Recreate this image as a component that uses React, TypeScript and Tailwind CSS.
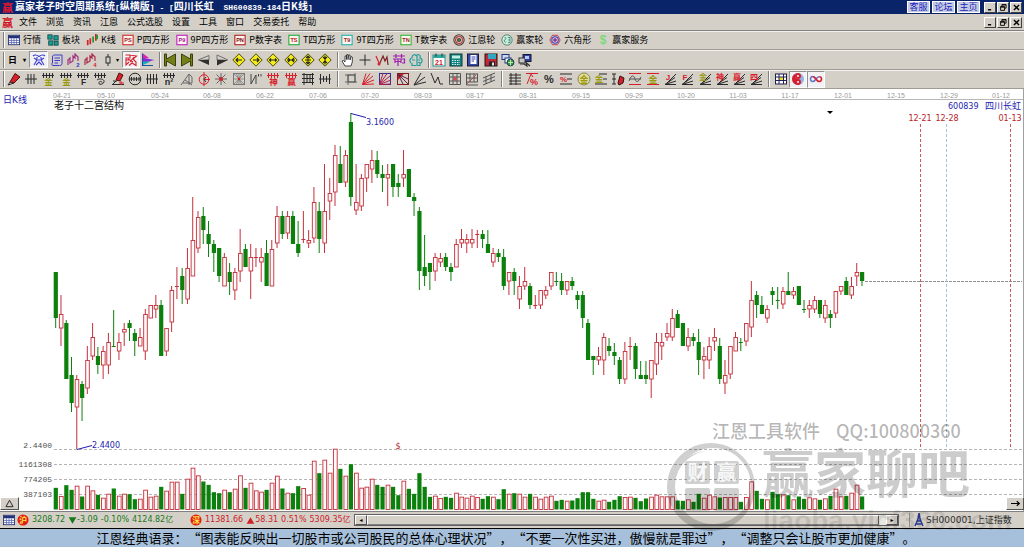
import type { ReactNode } from 'react';

/* ---------- data ---------- */

type Kind = 'u' | 'd';
// kind, high, body top, body bottom, low, volume height
type Candle = [Kind, number, number, number, number, number];

const STEP = 5.27;
const FIRST_X = 55.7;

const prices: [Kind, number, number, number, number][] = [
  ['d', 272, 272, 318, 328], ['u', 295, 314, 328, 346], ['d', 320, 323, 379, 379], ['d', 357, 375, 403, 412],
  ['u', 375, 379, 407, 449], ['d', 381, 384, 398, 421], ['u', 346, 360, 388, 394], ['u', 323, 337, 356, 360],
  ['d', 347, 356, 365, 374], ['u', 346, 351, 365, 379], ['u', 333, 342, 365, 374], ['d', 310, 346, 347, 347],
  ['u', 333, 342, 351, 360], ['u', 323, 329, 332, 346], ['d', 320, 323, 328, 341], ['d', 329, 333, 341, 356],
  ['u', 328, 337, 346, 346], ['u', 309, 314, 351, 360], ['u', 305, 305, 318, 318], ['u', 295, 305, 309, 318],
  ['d', 300, 305, 356, 356], ['u', 328, 328, 351, 356], ['u', 286, 290, 322, 332], ['u', 267, 286, 287, 299],
  ['d', 268, 276, 290, 304], ['u', 248, 268, 299, 304], ['u', 197, 240, 276, 276], ['u', 211, 217, 248, 253],
  ['d', 207, 216, 230, 244], ['d', 221, 234, 244, 257], ['d', 240, 244, 253, 272], ['d', 248, 248, 276, 282],
  ['u', 253, 257, 286, 286], ['d', 263, 272, 282, 295], ['u', 268, 272, 290, 300], ['u', 229, 253, 271, 282],
  ['d', 244, 249, 267, 267], ['u', 244, 257, 271, 299], ['u', 248, 257, 258, 267], ['u', 248, 257, 262, 282],
  ['d', 240, 253, 286, 286], ['u', 240, 249, 286, 286], ['u', 206, 216, 243, 248], ['d', 211, 216, 234, 239],
  ['u', 211, 216, 233, 239], ['d', 211, 216, 244, 244], ['d', 221, 244, 253, 257], ['u', 211, 239, 240, 243],
  ['u', 230, 240, 243, 248], ['u', 187, 202, 238, 243], ['d', 202, 211, 239, 253], ['u', 164, 211, 243, 253],
  ['u', 178, 193, 201, 220], ['u', 145, 155, 192, 206], ['d', 146, 164, 183, 183], ['u', 150, 155, 182, 187],
  ['d', 113, 122, 197, 206], ['u', 164, 202, 210, 215], ['u', 174, 178, 206, 211], ['u', 164, 164, 178, 192],
  ['u', 150, 160, 169, 183], ['d', 151, 160, 174, 178], ['d', 165, 174, 178, 192], ['u', 164, 174, 178, 206],
  ['d', 164, 164, 187, 197], ['d', 174, 183, 187, 197], ['u', 150, 174, 178, 187], ['d', 169, 169, 197, 197],
  ['d', 193, 197, 201, 216], ['d', 207, 211, 271, 290], ['d', 235, 267, 276, 286], ['d', 263, 263, 272, 290],
  ['u', 253, 257, 271, 281], ['u', 253, 258, 262, 267], ['d', 253, 257, 267, 271], ['d', 263, 267, 272, 281],
  ['u', 239, 244, 267, 267], ['u', 229, 239, 243, 248], ['u', 234, 239, 243, 253], ['u', 229, 239, 243, 248],
  ['u', 230, 234, 235, 248], ['d', 230, 234, 239, 248], ['d', 230, 244, 253, 253], ['u', 248, 253, 262, 267],
  ['d', 249, 253, 257, 262], ['d', 249, 257, 286, 290], ['u', 272, 272, 281, 295], ['d', 268, 272, 281, 295],
  ['u', 276, 286, 299, 309], ['u', 267, 281, 286, 290], ['d', 283, 286, 305, 309], ['u', 295, 305, 306, 309],
  ['u', 290, 290, 305, 309], ['u', 286, 290, 295, 299], ['u', 272, 272, 286, 290], ['d', 272, 281, 282, 286],
  ['d', 273, 281, 290, 295], ['u', 281, 281, 290, 295], ['d', 277, 281, 286, 290], ['d', 291, 295, 300, 309],
  ['d', 291, 295, 318, 328], ['d', 319, 323, 360, 360], ['d', 356, 356, 360, 375], ['u', 347, 356, 360, 365],
  ['u', 333, 337, 360, 375], ['d', 338, 346, 351, 356], ['d', 343, 352, 356, 365], ['d', 357, 360, 379, 384],
  ['u', 342, 351, 379, 384], ['u', 337, 346, 347, 360], ['d', 343, 346, 369, 379], ['d', 361, 375, 379, 379],
  ['d', 361, 375, 379, 384], ['u', 360, 360, 379, 398], ['u', 333, 342, 364, 375], ['u', 333, 342, 346, 360],
  ['u', 323, 333, 337, 341], ['u', 309, 318, 337, 341], ['d', 310, 314, 328, 328], ['d', 323, 323, 346, 346],
  ['u', 328, 337, 346, 351], ['d', 333, 337, 341, 346], ['d', 329, 342, 360, 375], ['u', 347, 356, 360, 379],
  ['u', 337, 346, 360, 369], ['u', 328, 337, 341, 351], ['d', 338, 346, 379, 384], ['u', 360, 375, 383, 394],
  ['u', 346, 346, 374, 379], ['u', 332, 337, 351, 351], ['d', 338, 342, 343, 351], ['u', 323, 323, 341, 346],
  ['u', 281, 300, 327, 337], ['d', 291, 295, 305, 318], ['d', 296, 305, 314, 314], ['u', 305, 309, 318, 323],
  ['d', 287, 291, 295, 305], ['d', 287, 300, 301, 309], ['u', 287, 291, 304, 309], ['d', 272, 291, 295, 295],
  ['u', 287, 291, 295, 299], ['d', 286, 286, 305, 305], ['d', 300, 309, 310, 313], ['u', 300, 305, 309, 318],
  ['u', 296, 300, 309, 313], ['d', 300, 300, 314, 318], ['u', 300, 305, 318, 323], ['d', 310, 314, 318, 328],
  ['u', 291, 291, 313, 318], ['u', 286, 286, 291, 295], ['d', 277, 281, 295, 295], ['u', 277, 286, 295, 299],
  ['u', 263, 272, 276, 286], ['d', 272, 272, 281, 286],
];

const volumes: number[] = [
  65, 39, 73, 59, 70, 39, 70, 56, 44, 34, 46, 63, 40, 46, 46, 31, 31, 58, 37, 40, 68, 55, 82, 82, 47, 91, 124, 101,
  84, 74, 52, 49, 58, 52, 61, 101, 65, 79, 56, 52, 59, 79, 100, 63, 49, 49, 70, 63, 43, 145, 109, 148, 109, 181, 122,
  100, 136, 109, 64, 67, 91, 74, 68, 73, 68, 43, 85, 62, 47, 109, 68, 38, 40, 33, 38, 35, 49, 37, 34, 40, 36, 32, 40,
  37, 31, 61, 46, 49, 46, 37, 47, 37, 31, 37, 40, 26, 29, 25, 27, 34, 52, 52, 32, 25, 28, 23, 29, 40, 36, 37, 35, 25,
  33, 37, 43, 38, 38, 38, 27, 26, 29, 23, 47, 34, 43, 38, 36, 36, 36, 36, 23, 36, 83, 56, 32, 29, 53, 46, 44, 43, 29,
  39, 32, 35, 32, 29, 32, 41, 61, 38, 41, 49, 73, 39,
];

const candles: Candle[] = prices.map((p, i) => [...p, (volumes[i] ?? 30) / 3] as Candle);

const axisDates: [string, number][] = [
  ['04-21', 62], ['05-10', 106], ['05-24', 160], ['06-08', 212], ['06-22', 265], ['07-06', 318], ['07-20', 370],
  ['08-03', 423], ['08-17', 475], ['08-31', 528], ['09-15', 581], ['09-29', 634], ['10-20', 686], ['11-03', 738],
  ['11-17', 790], ['12-01', 843], ['12-15', 896], ['12-29', 949], ['01-12', 1001],
];

/* ---------- icon helpers ---------- */

const K = '#2a2a2a';
const R = '#d8202c';
const G = '#9a9a10';
const B = '#3a3ad0';

const line = (d: string, color = K, width = 1, fill = 'none') => (
  <path d={d} stroke={color} strokeWidth={width} fill={fill} />
);
const glyph = (t: string, x: number, y: number, size: number, color: string) => (
  <text x={x} y={y} fontSize={size} fill={color} textAnchor="middle" fontWeight="bold">
    {t}
  </text>
);
const comb = (color = K) => line('M1 3.5H13M2.5 1V6M5.5 1V6M8.5 1V6M11.5 1V6', color);
const fan = (color = K) => line('M2 12.5H13M2 12.5L13 9M2 12.5L12 5.5M4 11L13 2', color);
const diamond = (arrow: string) => (
  <>
    <path d="M7 .8L13.2 7L7 13.2L.8 7Z" fill="#f4ec1c" stroke="#4a4a10" />
    {line(arrow, '#222', 1.1)}
  </>
);
const rays = (color: string) =>
  line('M1.5 12.5L13 12M1.5 12.5L13 8M1.5 12.5L12 4M1.5 12.5L9 1.5M1.5 12.5L5 1.5', color);
const combGlyph = (t: string, color: string, combColor = K) => (
  <>
    {comb(combColor)}
    {glyph(t, 7.5, 13, 8.5, color)}
  </>
);
const fanGlyph = (t: string, color: string) => (
  <>
    {fan()}
    {glyph(t, 5, 7.5, 8, color)}
  </>
);
const boxed = (t: string, stroke: string, color: string) => (
  <>
    <rect x="1" y="1.5" width="12" height="11" fill="#fff4f0" stroke={stroke} strokeWidth="1.3" />
    {glyph(t, 7, 9.7, 6.5, color)}
  </>
);

const calendarTable = (
  <>
    <rect x=".5" y="1.5" width="13" height="11" fill="#fff" stroke="#1c2c70" />
    <rect x="1" y="2" width="12" height="3" fill="#23307c" />
    {line('M1 7.5H13M1 10H13M4 5V12M7 5V12M10 5V12', '#5060b0', 0.9)}
  </>
);

type Tool = { name: string; art: ReactNode; on?: boolean };

function Icon({ children, size = 'size-[14px]' }: { children: ReactNode; size?: string }) {
  return (
    <svg viewBox="0 0 14 14" aria-hidden="true" className={`${size} block shrink-0 font-['Liberation_Sans','Noto_Sans_CJK_SC',sans-serif]`}>
      {children}
    </svg>
  );
}

/* ---------- toolbar contents ---------- */

const menus = ['文件', '浏览', '资讯', '江恩', '公式选股', '设置', '工具', '窗口', '交易委托', '帮助'];

const features: Tool[] = [
  { name: '行情', art: calendarTable },
  {
    name: '板块',
    art: (
      <g fill="#1c9c94" stroke="#0c4c4c">
        <rect x="1" y="1" width="5" height="5" />
        <rect x="8" y="2" width="5" height="5" />
        <rect x="2" y="8" width="5" height="5" />
        <rect x="8.5" y="8.5" width="4.5" height="4.5" />
      </g>
    ),
  },
  {
    name: 'K线',
    art: (
      <>
        {line('M2 7V13M5 5V12M11.5 0V8', R, 2)}
        {line('M8.3 3V10M13 1V6', '#1a9a2a', 2)}
      </>
    ),
  },
  { name: 'P四方形', art: boxed('PS', '#d03030', '#a01818') },
  { name: '9P四方形', art: boxed('P9', '#c020c0', '#a01890') },
  { name: 'P数字表', art: boxed('PN', '#b02828', '#801010') },
  { name: 'T四方形', art: boxed('TS', '#20b040', '#c02020') },
  { name: '9T四方形', art: boxed('T9', '#20b8b0', '#a02020') },
  { name: 'T数字表', art: boxed('TN', '#38b838', '#a02020') },
  {
    name: '江恩轮',
    art: (
      <g fill="none" strokeWidth="1.2">
        <circle cx="7" cy="7" r="6" stroke="#4a3030" />
        <circle cx="7" cy="7" r="4" stroke="#b03838" />
        <circle cx="7" cy="7" r="1.8" fill="#20a050" stroke="#703020" />
      </g>
    ),
  },
  {
    name: '赢家轮',
    art: (
      <>
        <circle cx="7" cy="7" r="6" fill="#d8ece0" stroke="#3c7868" />
        {line('M4 4.5C7 3 6 7 4 7C3 10 6 10 6 9M8 4H10.5V10H8M8 7H10.5', '#2c8a70')}
      </>
    ),
  },
  {
    name: '六角形',
    art: (
      <>
        {line('M4 1.5H10L13 7L10 12.5H4L1 7Z', '#c02838')}
        <circle cx="7" cy="7" r="3.8" fill="none" stroke={B} strokeWidth="1.2" />
        <circle cx="7" cy="7" r="1.6" fill="#6060e0" stroke="#a02060" />
      </>
    ),
  },
  { name: '赢家服务', art: glyph('$', 7, 12, 14, '#7cd87c') },
];

const dayTools: Tool[] = [
  {
    name: '周期图', on: true,
    art: line('M1 3C3 1 5 2 7 3.5C9 2 11 1 13 3M2 5L5 7L2 12M12 5L9 7L12 12M5 7H9M4 12L7 9L10 12M5 4V6M9 4V6', B, 1.1),
  },
  { name: '说明', art: line('M4.5 2H12V10.5C12 12.5 10 12.5 9.5 12.5H3C1.5 12.5 1.5 10 2.5 10V4C2.5 2.5 3.5 2 4.5 2ZM4.5 5H10M4.5 7.5H10M4.5 10H8', B) },
  { name: '副图二', art: <>{line('M1 12V7L3 5V10L6 8V3L8 5V1L11 4V8', '#a03080', 1.2)}{glyph('2', 11, 14, 6, B)}</> },
  { name: '副图四', art: <>{line('M1 12V7L3 5V10L6 8V3L8 5V1L11 4V8', '#a82848', 1.2)}{glyph('4', 11, 14, 6, R)}</> },
  { name: '柱形', art: <>{line('M7 1V4M7 10V13')}<rect x="5" y="4" width="4" height="6" fill="none" stroke={K} /></> },
];

const shapeTools: Tool[] = [
  {
    name: '江恩阵', on: true,
    art: line('M1.5 2H6V5H2V12L5 9M6 2L12.5 3L9 6L12 9V12.5L8 10L5 12.5M4 6L9 9M10 4L6 9M2 7H5', R, 1.1),
  },
  {
    name: '分布',
    art: (
      <>
        <path d="M2 .5L8 5L2 6Z" fill="#e020b0" />
        <path d="M2 5L13.5 7L2 10Z" fill="#8828d8" />
        <path d="M2 8.5L10 8.5L2 12Z" fill="#18b0b0" />
        {line('M1.5 .5V13M1.5 12.5H12', '#1c50a0')}
      </>
    ),
  },
];

const moveTools: Tool[] = [
  { name: '最前', art: <path d="M1.5 1H3.5V6L12.5 1V13L3.5 8V13H1.5Z" fill="#73801a" stroke="#3a4208" /> },
  { name: '最后', art: <path d="M12.5 1H10.5V6L1.5 1V13L10.5 8V13H12.5Z" fill="#73801a" stroke="#3a4208" /> },
  { name: '前移', art: <><path d="M1 7L12 6.5V12Z" fill="#303030" />{line('M1 7L12 2.5V7', '#707070')}</> },
  { name: '后移', art: <><path d="M13 7L2 6.5V12.5Z" fill="#303030" />{line('M13 7L2 2V7', '#707070')}</> },
  { name: '左移', art: diamond('M10 7H4M6 5L4 7L6 9') },
  { name: '右移', art: diamond('M4 7H10M8 5L10 7L8 9') },
  { name: '横向拉伸', art: diamond('M3.5 7H10.5M5 5.5L3.5 7L5 8.5M9 5.5L10.5 7L9 8.5') },
  { name: '横向压缩', art: diamond('M3 7H11M4 5L6 7L4 9M10 5L8 7L10 9') },
  { name: '纵向拉伸', art: diamond('M7 3V11M5 5L7 3L9 5M5 9L7 11L9 9M4 7H10') },
  { name: '纵向压缩', art: diamond('M7 2.5V11.5M5 4L7 6L9 4M5 10L7 8L9 10') },
];

const cursorTools: Tool[] = [
  { name: '手形', art: <path d="M4 13L1 8L2.5 7.5L4 9V3L5.5 2.8V6.5V1.8L7 1.6V6.5L7.5 2H9V7L10 3.5L11.3 4V9L10 13Z" fill="#fff" stroke="#333" strokeWidth=".9" /> },
  { name: '十字', art: line('M7 1.5V12.5M1.5 7H12.5') },
  { name: '波段', art: <>{line('M1 3L4 10', R, 1.2)}{line('M4 12L8 3L10 8L12 4L13 12', '#7a2020', 1.2)}<circle cx="4" cy="11" r="1.5" fill={R} /></> },
  { name: '节气', art: line('M1 3H13M4 1V5M9.5 1V5M1 6H12.5V10H10M6 6V13M3 6V10M9 6V10M3 8.5H9', '#a020b0', 1.2) },
  { name: '思维', art: line('M2 10C0 8 1 5 3 5C3 1 7 1 7 3C8 1 12 1 11 5C14 5 13.5 10 11 10V12.5H8V3M7 12.5H3V10M3 7H6M9 7H11.5M9 9.5H11', '#229c9c', 1.2) },
];

const appTools: Tool[] = [
  { name: '日历', art: <><rect x="1" y="2" width="12" height="11" fill="#fff" stroke="#289090" /><rect x="1" y="2" width="12" height="3" fill="#30a8a0" />{line('M4 .5V3.5M10 .5V3.5')}{glyph('21', 7, 12, 7, R)}</> },
  { name: '计算器', art: <><rect x="1" y="1" width="12" height="12" fill="#108080" stroke="#103838" /><rect x="3" y="2.5" width="8" height="3" fill="#bff0e0" />{line('M3 7.5H11M3 9.5H11M3 11.5H11', '#d8f0f0', 1.2)}{line('M5 6V13M7.5 6V13M10 6V13', '#108080')}</> },
  { name: '记事', art: <><rect x="1.5" y="1" width="11" height="12" fill="#3848a8" stroke="#181830" /><rect x="4.5" y="2" width="6" height="9" fill="#fff" />{line('M5.5 4H9.5M5.5 6H9.5M5.5 8H8', '#3848a8')}</> },
  { name: '保存', art: <><rect x="1" y="1" width="12" height="12" fill="#c02838" stroke="#281010" /><rect x="4" y="1" width="8" height="5" fill="#30a8c0" /><rect x="5" y="8.5" width="6" height="4.5" fill="#202028" /><rect x="8" y="9.5" width="2" height="3" fill="#e8e8e8" /></> },
  { name: '同步', art: <><rect x="1" y="1.5" width="7" height="5" fill="#c8d8f0" stroke="#203080" /><rect x="4" y="5" width="6" height="5" fill="#fff" stroke="#203080" /><circle cx="9.5" cy="9.5" r="3.4" fill="#38a048" stroke="#203850" />{line('M7 9.5H12M9.5 6.5V12.5', '#d8f0c0', 0.8)}</> },
  { name: '联网', art: <><rect x="5" y="1.5" width="8" height="7" fill="#3040a0" stroke="#181830" /><rect x="1" y="5" width="6" height="5" fill="#c8c8c8" stroke="#303030" />{line('M2 11H6L9 13L8 9.5L12 13', '#303030', 1.2)}<rect x="7" y="3" width="4" height="3" fill="#b8c8f8" /></> },
];

const penArt = <><path d="M3 10L8 1.5L13 5L7 11Z" fill={R} stroke="#501010" />{line('M3 10L1 13L7 11')}</>;

const drawTools: Tool[] = [
  { name: '画笔', art: penArt },
  { name: '等分线', art: line('M1 7H13M4 2V12M7 2V12M10 2V12') },
  { name: '金分割', art: combGlyph('金', G) },
  { name: '金周期', art: combGlyph('金', G) },
  { name: '斐波那契', art: combGlyph('F', K) },
  { name: '螺旋', art: <>{comb()}{line('M4 8C6 6 12 7 11 10C10 13 5 13 6 10.5C6.5 9 9 9 9 10.5')}</> },
  { name: '标注', art: <><path d="M5 8L8 1L12 3L9 9Z" fill={R} stroke="#501010" />{line('M2 9L6 9M1 12.5H13M5 9L2 12')}{line('M8 11H13M10 9V13', R)}</> },
  { name: '圆周', art: <><circle cx="7" cy="7" r="5.8" fill="none" stroke={K} />{line('M1 7H13M3.5 5V9M6 5V9M8.5 5V9M11 5V9')}</> },
  { name: '时间格', art: line('M1 7H13M2.5 2V12M5.5 2V12M8.5 2V12M11.5 2V12') },
  { name: '平方', art: <>{comb()}{glyph('n²', 7, 13, 9, K)}</> },
  { name: '三角', art: line('M1 13L9 2V13M3 11H12V5L9 2M5 8L12 13', '#666') },
  { name: '圆切', art: <><circle cx="7" cy="7.5" r="4.8" fill="none" stroke={R} />{line('M7 0V14M7 7.5H13', R)}{line('M9 5L7 7.5L9 10', K)}</> },
  { name: '星形', art: <>{line('M7 1V13M1 7H13M2.5 2.5L11.5 11.5M11.5 2.5L2.5 11.5', '#666')}<circle cx="7" cy="7" r="2" fill={R} /></> },
  { name: '放射', art: <><rect x="1.5" y="1.5" width="11" height="11" fill="none" stroke="#777" />{line('M1 1L13 13M13 1L1 13M7 1V13M1 7H13M4 1L10 13M10 1L4 13', '#777', 0.7)}<circle cx="7" cy="7" r="1.2" fill={R} /></> },
  { name: '折线', art: line('M2 2V12M2 12L7 3M7 3V12M9.5 2V4.5M12 2V4.5', '#444') },
  { name: '神分割', art: combGlyph('神', R, R) },
  { name: '赢分割', art: combGlyph('赢', R, R) },
  { name: '轨道', art: line('M1 2.5H13M1 6.5H13M1 10.5H13M3 1V13M6 2V10M9 2V10M11.5 1V13') },
  { name: '间隔', art: line('M1 7H13M2.5 2V12M5.5 4V10M8.5 4V10M11.5 2V12') },
  { name: '矩形', art: <><rect x="4" y="3" width="7" height="7" fill="none" stroke={K} />{line('M1 3H4M11 10H13M11 1V3M4 10V13M1 10H3', '#666')}</> },
  { name: '射线', art: rays(R) },
  { name: '射线框', art: <><rect x="1.5" y="1.5" width="11" height="11" fill="none" stroke="#303090" />{rays('#b02050')}</> },
  { name: '角度框', art: <><rect x="1.5" y="1.5" width="11" height="11" fill="none" stroke="#802020" /><path d="M2 2H8L5 5L2 8Z" fill={R} />{line('M2 2L12 12M2 2L12 7M2 2L7 12', '#602040')}</> },
  { name: '扇线', art: line('M1 13L13 10M1 13L12 5M1 13L8 1') },
  { name: '走势', art: line('M1 1L5 11L8 5L10 12L13 12') },
  { name: '网格', art: <>{line('M1.5 1.5H12.5V12.5H1.5ZM5 1.5V12.5M9 1.5V12.5M1.5 5H12.5M1.5 9H12.5', '#555')}{line('M5 7H9M7 5V9', R)}</> },
  { name: '坐标网', art: <>{line('M1.5 1V13H13M5 1.5V10M9 1.5V10M12.5 1.5V10M1.5 2H12.5M1.5 6H12.5M1.5 10H12.5', '#555')}{line('M2 12L11 3', '#b04040', 0.8)}</> },
  { name: '平行线', art: line('M1 6L13 1M1 9.5L13 4.5M1 13L13 8M4 4V12M9 2V10', '#555') },
];

const levelTools: Tool[] = [
  { name: '阶梯', art: line('M3 1V13M8 1V13M1 3H13M1 6H13M1 9H13M1 12H13') },
  { name: '涨幅', art: <>{line('M1 1.5H13M2 12L6 2L8 5', R)}{glyph('%', 9, 12.5, 9, R)}</> },
  { name: '百分比', art: glyph('%', 7, 11, 11, K) },
  { name: '百分线', art: <>{line('M1 2H13M8 7H13M1 12H13')}{glyph('%', 4.5, 10, 8, R)}</> },
  { name: '金圆', art: <><circle cx="7" cy="7" r="6" fill="#e4dc9c" stroke="#888848" />{glyph('金', 7, 10.5, 9, G)}</> },
  { name: '金线', art: <>{line('M5 2H13M9 7H13M1 12H13')}{glyph('金', 5, 10, 8.5, G)}</> },
  { name: '测量', art: <>{line('M1 2H5M1 12H5M3 2V12M1 7H5')}<path d="M7 11L9 4L13 6L12 11L8 13Z" fill={R} stroke="#301010" /></> },
  { name: '波浪', art: <>{line('M1 1.5H13M1 12.5H13', R)}{line('M1 9C4 1 6 4 7 7C8 11 11 10 13 5M1 7H13', '#555')}</> },
  { name: '金区间', art: <>{line('M1 1.5H13M1 12.5H13', R)}{glyph('金', 7, 10.5, 9, G)}</> },
  { name: 'J角度', art: fanGlyph('J', R) },
  { name: 'F角度', art: fanGlyph('F', R) },
  { name: '金角度', art: fanGlyph('金', G) },
  { name: '神角度', art: fanGlyph('神', R) },
  { name: '赢角度', art: fanGlyph('赢', R) },
  { name: '四角度', art: fanGlyph('四', R) },
];

const viewTools: Tool[] = [
  { name: '表格', art: <><rect x="1.5" y="2" width="11" height="10" fill="#fff" stroke="#202040" /><rect x="5" y="5" width="5" height="4" fill="#f0e020" />{line('M1.5 5H12.5M1.5 8.5H12.5M5 2V12M9.5 2V12', '#202060')}</> },
  { name: '太极', on: true, art: <><circle cx="7" cy="7" r="6" fill="#90b4e8" /><path d="M7 1A6 6 0 0 0 7 13A3 3 0 0 0 7 7A3 3 0 0 1 7 1Z" fill={R} /><circle cx="7" cy="4" r="3" fill={R} /><circle cx="7" cy="4" r="1" fill="#fff" /><circle cx="7" cy="10" r="1" fill="#fff" /></> },
  { name: '无限', on: true, art: <>{line('M7 7C5 3.5 1.5 4 1.5 7C1.5 10 5 10.5 7 7C8 5.5 9 4.8 10.2 4.8', '#6878c8', 1.6)}{line('M3.8 4.8C5 4.8 6 5.5 7 7C9 10.5 12.5 10 12.5 7C12.5 5.5 11.500 4.8 10.2 4.8', R, 1.6)}</> },
];

/* ---------- bars ---------- */

function ToolGroup({ tools, className }: { tools: Tool[]; className: string }) {
  return (
    <div className={`flex shrink-0 items-center ${className}`}>
      {tools.map((t) => (
        <button
          key={t.name}
          type="button"
          aria-label={t.name}
          aria-pressed={t.on}
          className={`flex h-[17px] flex-1 items-center justify-center ${
            t.on ? 'border border-[#909090] border-r-white border-b-white bg-[#f2f2f4]' : ''
          }`}
        >
          <Icon>{t.art}</Icon>
        </button>
      ))}
    </div>
  );
}

const Divider = ({ wide = false }: { wide?: boolean }) => (
  <div className={`ml-[3px] h-4 w-0.5 shrink-0 border-l border-[#808080] bg-white ${wide ? 'mr-[3px]' : ''}`} />
);

const barClass = 'flex items-center border-b border-[#a09c94] shadow-[inset_0_1px_0_#f4f2ee]';

function WindowButtons() {
  const art = ['M3 10.5H8', 'M4.5 5V2.5H11V8H8.5M2.5 5.5H8.5V11.5H2.5ZM2.5 6.5H8.5M4.5 3H11', 'M3 3L11 11M11 3L3 11'];
  return (
    <div className="flex gap-px">
      {['最小化', '还原', '关闭'].map((n, i) => (
        <button
          key={n}
          type="button"
          aria-label={n}
          className="flex h-[11px] w-3 items-center justify-center border border-white border-r-[#404040] border-b-[#404040] bg-[#d4d0c8]"
        >
          <Icon size="size-[9px]">{line(art[i], '#000', i === 1 ? 1.4 : 2.2)}</Icon>
        </button>
      ))}
    </div>
  );
}

const Mono = ({ children }: { children: ReactNode }) => (
  <span className="font-['Liberation_Mono',monospace] text-[8px] whitespace-pre">{children}</span>
);

function TitleBar() {
  return (
    <header className="flex h-[14px] items-center bg-[#0a246a] px-0.5 text-white">
      <span className="w-[13px] text-[11px] leading-3 font-bold text-[#e01830]">赢</span>
      <h1 className="flex-1 text-[10px] leading-3 font-bold">
        赢家老子时空周期系统<Mono>[</Mono>纵横版<Mono>] - [</Mono>四川长虹<Mono>{'  SH600839-184'}</Mono>日K线<Mono>]</Mono>
      </h1>
      <nav className="mr-1 flex gap-0.5">
        {['客服', '论坛', '主页'].map((t) => (
          <a key={t} href="#" className="h-3 w-[23px] border border-white bg-[#c4cbe0] text-center text-[9px] leading-[10px] text-[#2020c0]">
            {t}
          </a>
        ))}
      </nav>
      <WindowButtons />
    </header>
  );
}

function MenuBar() {
  return (
    <div className="flex h-[17px] items-center border-b border-[#808080] px-0.5">
      <span className="w-[13px] text-[11px] leading-3 font-bold text-[#d01020]">赢</span>
      <nav className="ml-1 flex flex-1 gap-[9px] text-[9px] leading-3">
        {menus.map((m) => (
          <button key={m} type="button">{m}</button>
        ))}
      </nav>
      <WindowButtons />
    </div>
  );
}

function FeatureBar() {
  return (
    <div className={`${barClass} h-[19px]`}>
      <Divider />
      <div className="flex gap-[6px] pl-[3px] text-[9px] leading-3">
        {features.map((f) => (
          <button key={f.name} type="button" className="flex items-center gap-[3px] whitespace-nowrap">
            <Icon size="size-3">{f.art}</Icon>
            {f.name}
          </button>
        ))}
      </div>
    </div>
  );
}

function NavigationBar() {
  return (
    <div className={`${barClass} h-5`}>
      <Divider />
      <button type="button" className="flex w-6 items-center justify-center gap-1.5 text-[9px] font-bold">
        日<span className="text-[6px]">▾</span>
      </button>
      <ToolGroup tools={dayTools} className="w-[87px]" />
      <span className="w-[6px] text-[6px]">▾</span>
      <ToolGroup tools={shapeTools} className="w-[34px]" />
      <Divider />
      <ToolGroup tools={moveTools} className="w-[173px]" />
      <Divider />
      <ToolGroup tools={cursorTools} className="w-[86px]" />
      <Divider />
      <ToolGroup tools={appTools} className="w-[104px]" />
    </div>
  );
}

function DrawingBar() {
  return (
    <div className={`${barClass} h-[19px]`}>
      <Divider />
      <ToolGroup tools={drawTools.slice(0, 19)} className="w-[329px]" />
      <Divider wide />
      <ToolGroup tools={drawTools.slice(19)} className="w-[156px]" />
      <Divider wide />
      <ToolGroup tools={levelTools} className="w-[259px]" />
      <Divider wide />
      <ToolGroup tools={viewTools} className="w-[52px]" />
    </div>
  );
}

/* ---------- chart ---------- */

function Chart() {
  const base = 509.5;
  const up = '#c4303c';
  const down = '#0c800c';
  return (
    <svg
      viewBox="0 89 1024 422"
      role="img"
      aria-label="四川长虹 日K线"
      className="block h-auto w-full bg-white font-['DejaVu_Sans','Noto_Sans_CJK_SC',sans-serif] text-[8px]"
    >
      <g className="font-['Liberation_Sans',sans-serif] text-[7px]" fill="#9a9a9a" textAnchor="middle">
        {axisDates.map(([d, x]) => (
          <text key={d} x={x} y={98}>{d}</text>
        ))}
      </g>
      <path d="M53 99.5H1024" stroke="#b8b8b8" />
      <path d="M54 449.5H1022M54 464.5H1022M54 479.5H1022M54 494.5H1022" stroke="#b4b4b4" strokeDasharray="3 2" />
      <path d="M865 281.5H1022" stroke="#909090" strokeDasharray="3 1" />
      <path d="M920.5 124V449M1010.5 124V449" stroke="#cc5860" strokeDasharray="3 2" />
      <path d="M946.5 124V449" stroke="#a8c4d0" strokeDasharray="3 2" />

      {candles.map(([kind, hi, top, bottom, lo, vol], i) => {
        const x = FIRST_X + i * STEP;
        const rising = kind === 'u';
        const flat = bottom - top <= 1;
        const c = rising ? up : down;
        return (
          <g key={i}>
            <path d={`M${x} ${hi}V${lo}`} stroke={c} strokeWidth="1" />
            {flat ? (
              <path d={`M${x - 2} ${top + 0.5}H${x + 2}`} stroke={c} />
            ) : (
              <rect
                x={rising ? x - 1.6 : x - 2}
                y={rising ? top + 0.5 : top}
                width={rising ? 3.6 : 4.2}
                height={rising ? bottom - top - 0.5 : bottom - top}
                fill={rising ? '#fff8f8' : down}
                stroke={rising ? up : 'none'}
                strokeWidth=".9"
              />
            )}
            <rect
              x={rising ? x - 1.6 : x - 2}
              y={base - vol}
              width={rising ? 3.8 : 4.2}
              height={vol}
              fill={rising ? '#fff8f8' : down}
              stroke={rising ? up : 'none'}
              strokeWidth=".9"
            />
          </g>
        );
      })}

      <g fill="#1c1cb0">
        <path d="M351 113.5L366 117.5M77 449.5L92 445.5" stroke="#1c1cb0" fill="none" />
        <text x="366" y="125">3.1600</text>
        <text x="92" y="448">2.4400</text>
        <text x="3" y="103" fontSize="9">日K线</text>
        <text x="948" y="109">600839</text>
        <text x="985" y="109" fontSize="9">四川长虹</text>
      </g>
      <text x="54" y="109" fontSize="10" fill="#111">老子十二宫结构</text>
      <g fill="#b81c24" textAnchor="middle">
        <text x="920" y="121">12-21</text>
        <text x="947" y="121">12-28</text>
        <text x="1010" y="121">01-13</text>
        <text x="398" y="449">$</text>
      </g>
      <path d="M827 111H833L830 114Z" fill="#000" />
      <g fill="#505050" textAnchor="end" className="font-['Liberation_Mono',monospace]">
        <text x="52" y="448">2.4400</text>
        <text x="52" y="467">1161308</text>
        <text x="52" y="482">774205</text>
        <text x="52" y="497">387103</text>
      </g>
      <path d="M1023.5 89V511" stroke="#a0a0a0" />
    </svg>
  );
}

function Watermark() {
  return (
    <div aria-hidden="true" className="pointer-events-none absolute right-0 bottom-[-27px] z-10 h-[120px] w-[362px]">
      <p className="absolute top-0 left-[50px] flex gap-4 text-lg leading-6 font-medium whitespace-nowrap text-black/30">
        <span>江恩工具软件</span>
        <span>QQ:100800360</span>
      </p>
      <svg viewBox="0 0 92 92" className="absolute top-[23px] left-[3px] size-[92px] font-bold">
        <g opacity=".18">
          <path fillRule="evenodd" d="M46 2A44 44 0 1 1 45.9 2ZM48 7A38 38 0 1 0 48.1 7Z" />
          <path d="M12 62A38 38 0 0 1 40 10A35 35 0 0 0 12 62Z" />
          <rect x="20" y="20" width="25" height="23" rx="2" />
          <rect x="49" y="20" width="25" height="23" rx="2" />
          <rect x="20" y="47" width="25" height="23" rx="2" />
          <rect x="49" y="47" width="25" height="23" rx="2" />
        </g>
        <g fill="#fff" opacity=".85" fontSize="20" textAnchor="middle">
          <text x="32.5" y="39">财</text>
          <text x="61.5" y="39">赢</text>
        </g>
      </svg>
      <p className="absolute top-[23px] left-[100px] text-[52px] leading-[60px] font-bold whitespace-nowrap text-black/20">赢家聊吧</p>
      <p className="absolute top-[87px] left-[101px] font-['Liberation_Sans',sans-serif] text-[28px] leading-8 font-bold whitespace-nowrap text-black/10">
        liaoba.yicf360.com
      </p>
    </div>
  );
}

/* ---------- footer ---------- */

function Quote({ mark, values, up, width }: { mark: string; values: string[]; up: boolean; width: string }) {
  return (
    <div className={`flex shrink-0 items-center gap-[3px] whitespace-nowrap ${width} ${up ? 'text-[#d02028]' : 'text-[#187818]'}`}>
      <Icon size="size-3">
        <circle cx="7" cy="7" r="6.5" fill="#e41c10" />
        {glyph(mark, 7, 10.5, 9, '#ffe84a')}
      </Icon>
      <span>{values[0]}</span>
      <span className="flex items-center">
        <Icon size="size-[9px]">
          <path d={up ? 'M7 2L13 12H1Z' : 'M1 2H13L7 12Z'} fill="currentColor" />
        </Icon>
        {values[1]}
      </span>
      {values.slice(2).map((v) => (
        <span key={v}>{v}</span>
      ))}
    </div>
  );
}

const raised = 'flex items-center justify-center border border-white border-r-[#505050] border-b-[#505050] bg-[#d4d0c8]';

function StatusBar() {
  return (
    <div className="flex h-4 items-center bg-[#d4d0c8] pl-[3px] font-['DejaVu_Sans','Noto_Sans_CJK_SC',sans-serif] text-[8px] leading-3">
      <div className="mr-0.5 shrink-0">
        <Icon size="size-3">{calendarTable}</Icon>
      </div>
      <Quote mark="沪" up={false} width="w-[173px]" values={['3208.72', '-3.09', '-0.10%', '4124.82亿']} />
      <Quote mark="深" up width="w-[164px]" values={['11381.66', '58.31', '0.51%', '5309.35亿']} />
      <div className="flex h-3 flex-1 items-stretch border border-[#606060] bg-[#e8e6e0]">
        <button type="button" aria-label="向左" className={`${raised} w-3 text-[6px]`}>◂</button>
        <div className="flex-1 border border-white border-r-[#606060] border-b-[#808080] bg-[#d4d0c8]" />
        <div className="w-[7px]" />
        <button type="button" aria-label="向右" className={`${raised} w-3 text-[6px]`}>▸</button>
      </div>
      <div className="ml-2.5 flex w-[115px] shrink-0 items-center border-l border-[#909090] pl-0.5 text-[9px] text-[#303030]">
        <Icon size="size-[14px]">{line('M7 0L6 6L3 13M7 0L8 6L11 13M5 8H9M4 11L10 11M6 4H8', '#2c3c98', 1.5)}</Icon>
        SH000001,上证指数
      </div>
    </div>
  );
}

export default function App() {
  return (
    <div lang="zh-CN" className="w-full bg-white font-['Noto_Sans_CJK_SC','Liberation_Sans',sans-serif] text-black">
      <div className="bg-[#d4d0c8]">
        <TitleBar />
        <MenuBar />
        <FeatureBar />
        <NavigationBar />
        <DrawingBar />
      </div>
      <main className="relative">
        <Chart />
        <button type="button" aria-label="展开" className={`${raised} absolute bottom-px left-0 h-[13px] w-[19px]`}>
          <Icon size="size-[9px]">{line('M7 2L12.5 12H1.5Z', '#222', 1.5)}</Icon>
        </button>
        <button type="button" aria-label="右移一页" className={`${raised} absolute right-0 bottom-px h-[13px] w-[18px]`}>
          <Icon size="size-[9px]">{line('M0 7H13M9 3.5L13 7L9 10.5', '#000', 1.8)}</Icon>
        </button>
        <Watermark />
      </main>
      <div className="border-t border-[#808080]">
        <StatusBar />
      </div>
      <footer className="border-t border-black bg-[#a6c0dc] pr-3 text-center text-[13px] leading-[18px] whitespace-nowrap [text-spacing-trim:space-all]">
        江恩经典语录：“图表能反映出一切股市或公司股民的总体心理状况”，“不要一次性买进，傲慢就是罪过”，“调整只会让股市更加健康”。
      </footer>
    </div>
  );
}
